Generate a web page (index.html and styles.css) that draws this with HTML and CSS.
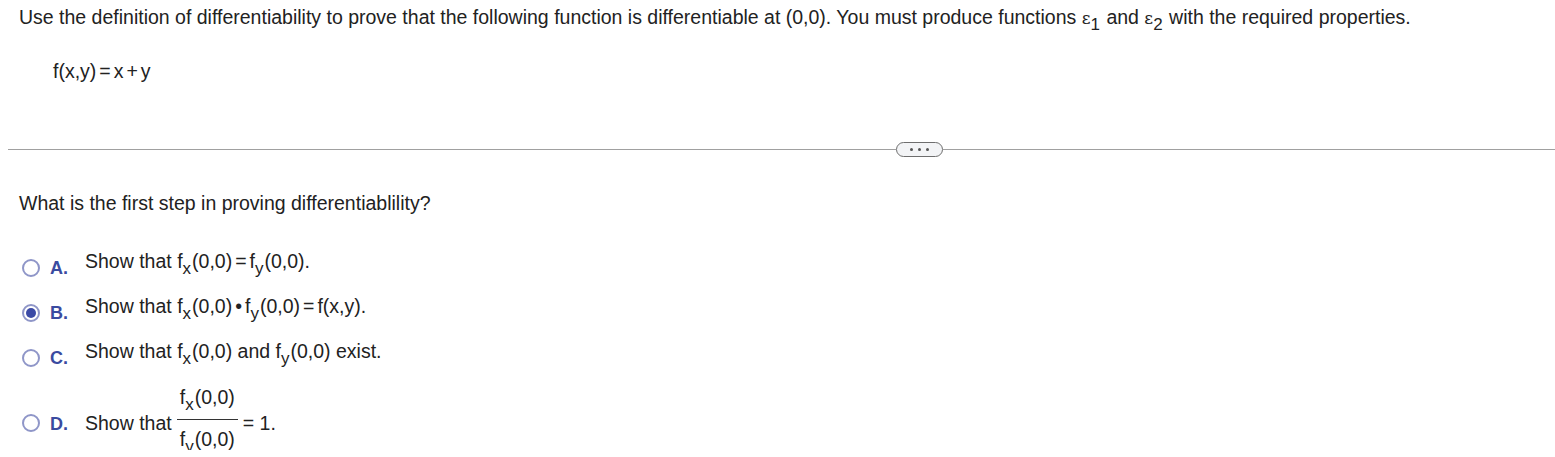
FILE: index.html
```html
<!DOCTYPE html>
<html>
<head>
<meta charset="utf-8">
<link rel="stylesheet" href="styles.css">
</head>
<body>
<div class="page">
  <p class="intro">Use the definition of differentiability to prove that the following function is differentiable at (0,0). You must produce functions <span class="eps">ε</span><sub>1</sub> and <span class="eps">ε</span><sub>2</sub> with the required properties.</p>
  <p class="func">f(x,y)<span class="op">=</span>x<span class="op">+</span>y</p>
  <div class="sep">
    <div class="sep-line sep-left"></div>
    <div class="pill"><span></span><span></span><span></span></div>
    <div class="sep-line"></div>
  </div>
  <p class="question">What is the first step in proving differentiablility?</p>
  <div class="options">
    <div class="opt">
      <span class="radio"></span><span class="lbl">A.</span>
      <span class="txt">Show that f<sub>x</sub>(0,0)<span class="op">=</span>f<sub>y</sub>(0,0).</span>
    </div>
    <div class="opt">
      <span class="radio checked"></span><span class="lbl">B.</span>
      <span class="txt">Show that f<sub>x</sub>(0,0)<span class="op">•</span>f<sub>y</sub>(0,0)<span class="op">=</span>f(x,y).</span>
    </div>
    <div class="opt">
      <span class="radio"></span><span class="lbl">C.</span>
      <span class="txt">Show that f<sub>x</sub>(0,0) and f<sub>y</sub>(0,0) exist.</span>
    </div>
    <div class="opt opt-d">
      <span class="radio"></span><span class="lbl">D.</span>
      <span class="txt">Show that</span>
      <span class="frac">
        <span class="num">f<sub>x</sub>(0,0)</span>
        <span class="den">f<sub>y</sub>(0,0)</span>
      </span>
      <span class="txt">= 1.</span>
    </div>
  </div>
</div>
</body>
</html>
```

FILE: styles.css
```css
html, body {
  margin: 0;
  padding: 0;
  background: #fff;
}
.page {
  font-family: "Liberation Sans", Arial, sans-serif;
  font-size: 19.5px;
  color: #222;
  padding: 6px 0 0 8px;
}
p { margin: 0; }
.intro {
  padding-left: 11px;
  line-height: 22px;
}
.eps {
  font-family: "DejaVu Serif", serif;
  font-size: 17px;
}
sub {
  font-size: 17px;
  vertical-align: -6px;
  line-height: 0;
  margin-right: 1px;
}
.op {
  padding: 0 3px;
}
.func {
  padding-left: 45px;
  margin-top: 31px;
  line-height: 22px;
}
.sep {
  display: flex;
  align-items: center;
  margin-top: 60px;
}
.sep-line {
  flex: 1;
  height: 1px;
  background: #a0a0a0;
}
.sep-left { flex: 0 0 888px; }
.pill {
  box-sizing: border-box;
  width: 47px;
  height: 15px;
  border: 1px solid #6e6e6e;
  border-radius: 8px;
  background: #f3f4f6;
  display: flex;
  align-items: center;
  justify-content: center;
  gap: 5px;
}
.pill span {
  width: 3px;
  height: 3px;
  border-radius: 50%;
  background: #555;
}
.question {
  padding-left: 11px;
  margin-top: 35px;
  line-height: 22px;
}
.options {
  display: flex;
  flex-direction: column;
  margin-top: 36px;
  gap: 23px;
}
.opt {
  display: flex;
  align-items: flex-start;
  height: 22px;
}
.radio {
  box-sizing: border-box;
  width: 18px;
  height: 18px;
  border: 2px solid #8f96c8;
  border-radius: 50%;
  margin-left: 14px;
  margin-top: 9px;
  display: flex;
  align-items: center;
  justify-content: center;
}
.radio.checked::after {
  content: "";
  width: 10px;
  height: 10px;
  border-radius: 50%;
  background: #3b4aa6;
}
.lbl {
  font-weight: bold;
  font-size: 18px;
  color: #3a4ba0;
  margin-left: 10px;
  width: 35px;
  line-height: 22px;
  margin-top: 7px;
}
.txt {
  white-space: pre;
  line-height: 22px;
}
.opt-d {
  height: 64px;
  margin-top: 1px;
}
.opt-d .radio { margin-top: 28px; }
.opt-d .lbl { margin-top: 27px; }
.opt-d .txt { margin-top: 26px; }
.frac {
  display: flex;
  flex-direction: column;
  align-items: stretch;
  text-align: center;
  margin: 0 5px 0 5px;
}
.num, .den {
  line-height: 22px;
  padding: 0 3px;
}
.num {
  border-bottom: 1px solid #333;
  padding-bottom: 11px;
}
.den { padding-top: 8px; }
```
